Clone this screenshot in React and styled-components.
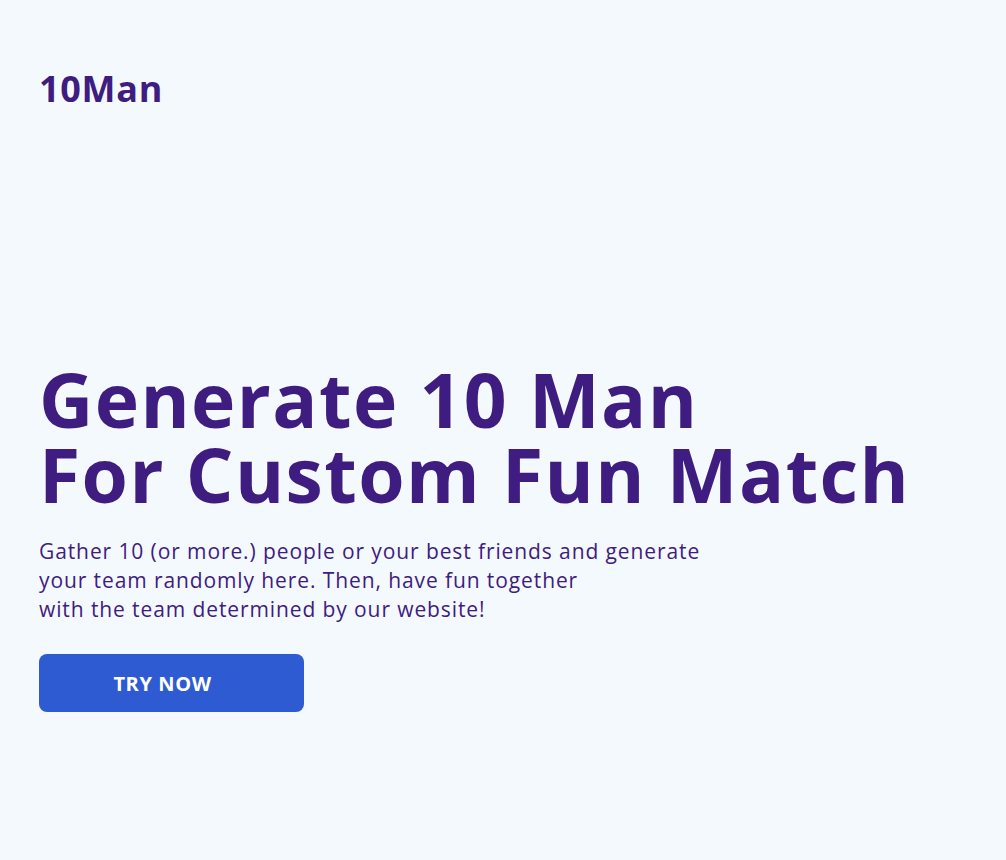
import React from 'react';
import styled, { createGlobalStyle } from 'styled-components';

const GlobalStyle = createGlobalStyle`
  html, body {
    margin: 0;
    padding: 0;
    background-color: #f4f9fd;
  }
  body {
    font-family: "Open Sans", "Noto Sans", sans-serif;
    color: #3f1c80;
  }
`;

const Page = styled.main`
  min-height: 860px;
  padding: 0 39px;
  box-sizing: border-box;
`;

const Header = styled.header`
  display: flex;
  align-items: center;
  height: 176px;
`;

const Logo = styled.h1`
  margin: 0;
  font-size: 36px;
  font-weight: 700;
  letter-spacing: 0.7px;
  color: #3f1c80;
`;

const Hero = styled.section`
  display: flex;
  flex-direction: column;
  align-items: flex-start;
  padding-top: 186px;
`;

const Heading = styled.h2`
  margin: 0;
  font-size: 75px;
  line-height: 75px;
  font-weight: 700;
  letter-spacing: 1.4px;
  color: #3f1c80;
`;

const Lead = styled.p`
  margin: 25px 0 0;
  font-size: 21px;
  line-height: 29px;
  font-weight: 400;
  letter-spacing: 0.9px;
  color: #3f1c80;
`;

const Button = styled.button`
  margin-top: 30px;
  width: 265px;
  height: 58px;
  padding: 0 18px 0 0;
  border: none;
  border-radius: 8px;
  background-color: #2e5bd2;
  color: #ffffff;
  font-family: inherit;
  font-size: 20px;
  font-weight: 700;
  letter-spacing: 0.6px;
  text-transform: uppercase;
  cursor: pointer;
`;

const App = () => (
  <>
    <GlobalStyle />
    <Page>
      <Header>
        <Logo>10Man</Logo>
      </Header>
      <Hero>
        <Heading>
          Generate 10 Man
          <br />
          For Custom Fun Match
        </Heading>
        <Lead>
          Gather 10 (or more.) people or your best friends and generate
          <br />
          your team randomly here. Then, have fun together
          <br />
          with the team determined by our website!
        </Lead>
        <Button>Try Now</Button>
      </Hero>
    </Page>
  </>
);

export default App;
